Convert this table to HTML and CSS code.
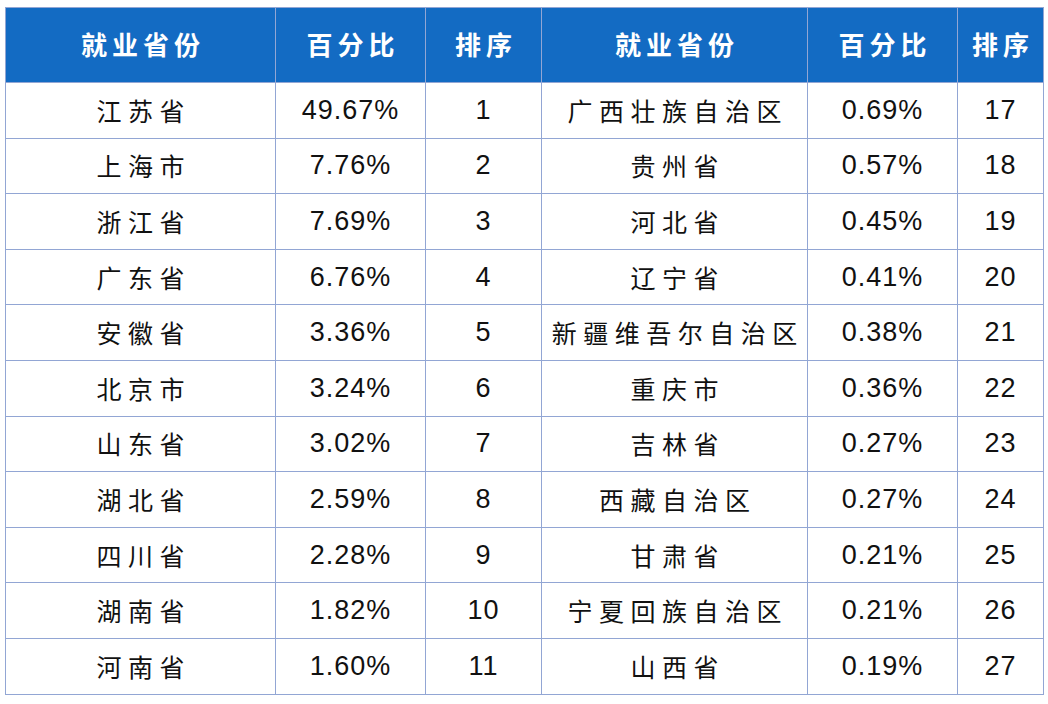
FILE: index.html
```html
<!DOCTYPE html>
<html lang="zh">
<head>
<meta charset="utf-8">
<link rel="stylesheet" href="styles.css">
</head>
<body>
<table class="rank">
  <colgroup>
    <col class="c1"><col class="c2"><col class="c3"><col class="c4"><col class="c5"><col class="c6">
  </colgroup>
  <thead>
    <tr><th>就业省份</th><th>百分比</th><th>排序</th><th>就业省份</th><th>百分比</th><th>排序</th></tr>
  </thead>
  <tbody>
    <tr><td class="zh">江苏省</td><td class="num">49.67%</td><td class="num">1</td><td class="zh">广西壮族自治区</td><td class="num">0.69%</td><td class="num">17</td></tr>
    <tr><td class="zh">上海市</td><td class="num">7.76%</td><td class="num">2</td><td class="zh">贵州省</td><td class="num">0.57%</td><td class="num">18</td></tr>
    <tr><td class="zh">浙江省</td><td class="num">7.69%</td><td class="num">3</td><td class="zh">河北省</td><td class="num">0.45%</td><td class="num">19</td></tr>
    <tr><td class="zh">广东省</td><td class="num">6.76%</td><td class="num">4</td><td class="zh">辽宁省</td><td class="num">0.41%</td><td class="num">20</td></tr>
    <tr><td class="zh">安徽省</td><td class="num">3.36%</td><td class="num">5</td><td class="zh">新疆维吾尔自治区</td><td class="num">0.38%</td><td class="num">21</td></tr>
    <tr><td class="zh">北京市</td><td class="num">3.24%</td><td class="num">6</td><td class="zh">重庆市</td><td class="num">0.36%</td><td class="num">22</td></tr>
    <tr><td class="zh">山东省</td><td class="num">3.02%</td><td class="num">7</td><td class="zh">吉林省</td><td class="num">0.27%</td><td class="num">23</td></tr>
    <tr><td class="zh">湖北省</td><td class="num">2.59%</td><td class="num">8</td><td class="zh">西藏自治区</td><td class="num">0.27%</td><td class="num">24</td></tr>
    <tr><td class="zh">四川省</td><td class="num">2.28%</td><td class="num">9</td><td class="zh">甘肃省</td><td class="num">0.21%</td><td class="num">25</td></tr>
    <tr><td class="zh">湖南省</td><td class="num">1.82%</td><td class="num">10</td><td class="zh">宁夏回族自治区</td><td class="num">0.21%</td><td class="num">26</td></tr>
    <tr><td class="zh">河南省</td><td class="num">1.60%</td><td class="num">11</td><td class="zh">山西省</td><td class="num">0.19%</td><td class="num">27</td></tr>
  </tbody>
</table>
</body>
</html>
```

FILE: styles.css
```css
html, body {
  margin: 0;
  padding: 0;
  background: #ffffff;
}
body {
  padding: 7px 0 0 5px;
  font-family: "Noto Sans CJK SC", "Noto Sans", sans-serif;
  color: #111111;
}
.rank {
  border-collapse: collapse;
  table-layout: fixed;
  width: 1038px;
}
.c1 { width: 270px; }
.c2 { width: 150px; }
.c3 { width: 116px; }
.c4 { width: 266px; }
.c5 { width: 150px; }
.c6 { width: 86px; }

.rank th, .rank td {
  border: 1.5px solid #92a6d4;
  text-align: center;
  padding: 0;
  overflow: hidden;
  white-space: nowrap;
}
.rank th {
  background: #136bc3;
  color: #ffffff;
  height: 72px;
  font-size: 26px;
  font-weight: 700;
  letter-spacing: 5px;
  text-indent: 5px;
  line-height: 1;
  padding-bottom: 2px;
}
.rank td {
  height: 54.6px;
  line-height: 1;
}
.zh {
  font-size: 25px;
  letter-spacing: 6.5px;
  text-indent: 6.5px;
}
.num {
  font-family: "Liberation Sans", "Open Sans", sans-serif;
  font-size: 27px;
  letter-spacing: 1px;
}
```
